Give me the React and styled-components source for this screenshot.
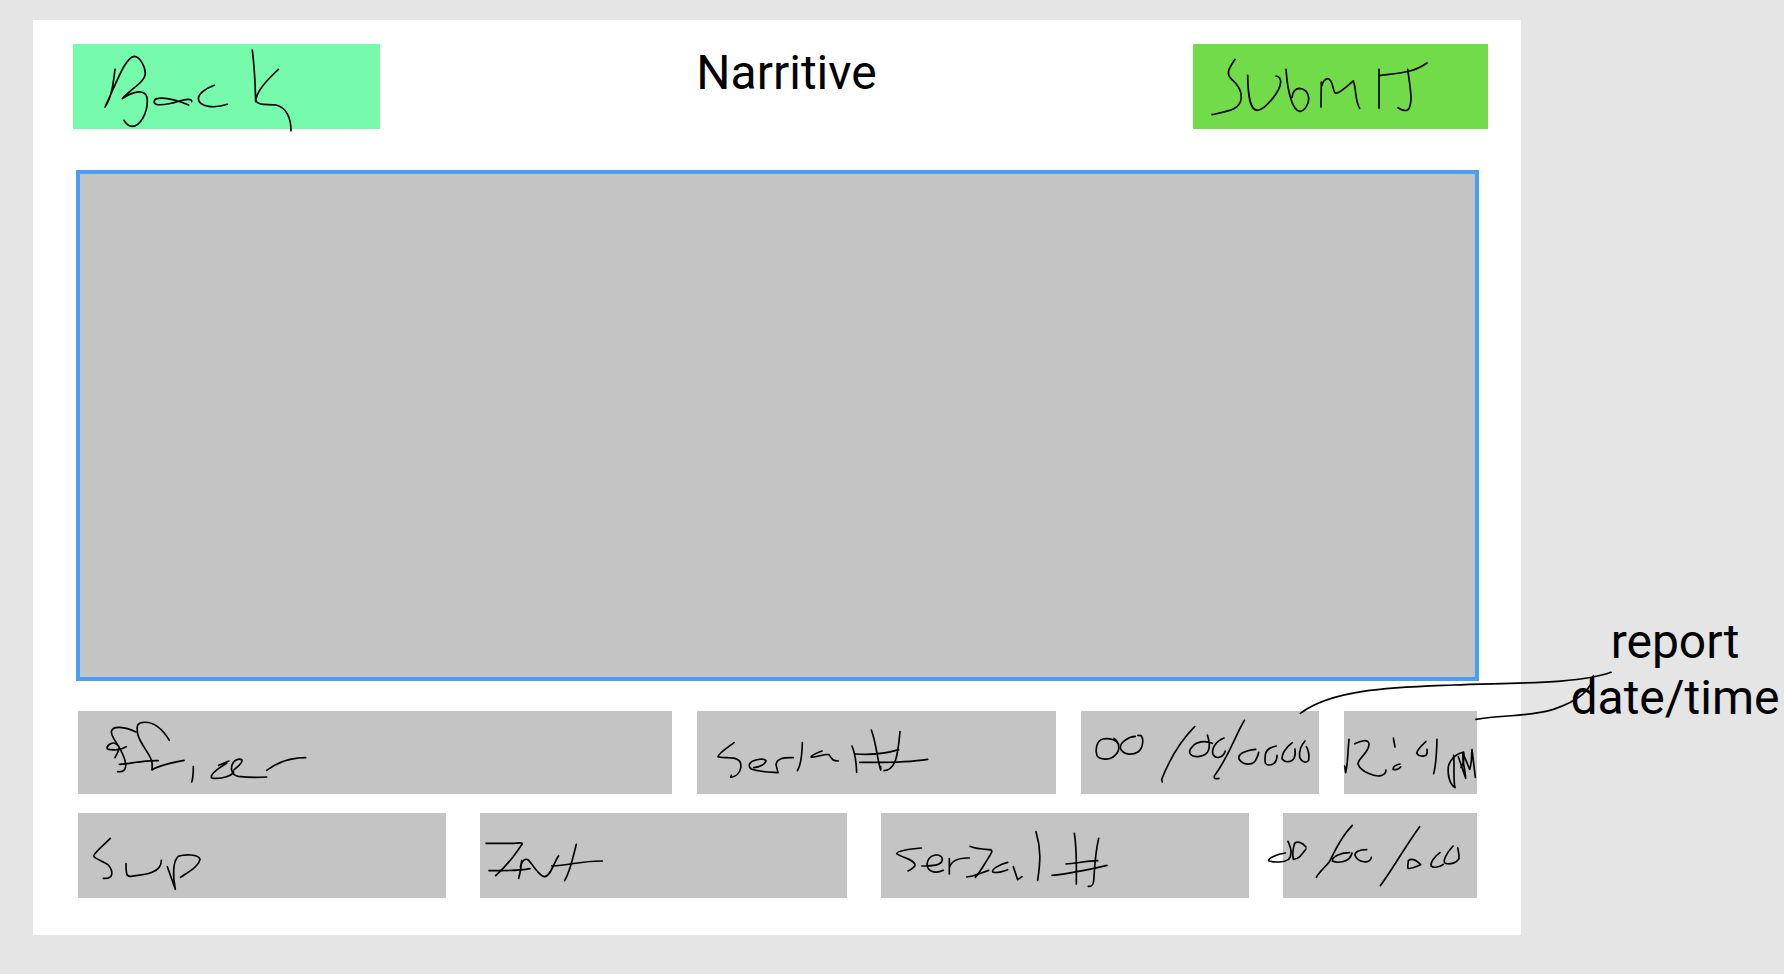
import React from "react";
import styled, { createGlobalStyle } from "styled-components";

const GlobalStyle = createGlobalStyle`
  *, *::before, *::after { box-sizing: border-box; }
  body {
    margin: 0;
    background: #e5e5e5;
    color: #000;
    font-family: Roboto, "Liberation Sans", sans-serif;
  }
`;

const Page = styled.div`
  display: grid;
  grid-template-columns: minmax(0, 1fr) 263px;
  padding: 20px 0 38px 33px;
`;

const Frame = styled.form`
  display: flex;
  flex-direction: column;
  padding: 24px 0 37px;
  background: #fff;
`;

const Header = styled.header`
  display: flex;
  justify-content: space-between;
  align-items: flex-start;
  padding: 0 33px 0 40px;
`;

const Title = styled.h1`
  margin: 0;
  font-size: 48px;
  font-weight: 400;
  line-height: 58px;
`;

const ActionButton = styled.button`
  position: relative;
  flex: none;
  width: ${(p) => p.$width}px;
  height: 85px;
  padding: 0;
  border: 0;
  background: ${(p) => p.$color};
  cursor: pointer;
`;

const NarrativeBox = styled.textarea`
  display: block;
  height: 511px;
  margin: 41px 42px 30px 43px;
  padding: 16px;
  border: 4px solid #489ff5;
  border-radius: 0;
  outline: none;
  resize: none;
  background: #c4c4c4;
  font: inherit;
  font-size: 24px;
`;

const Fields = styled.div`
  display: flex;
  flex-direction: column;
  gap: 19px;
  padding: 0 44px 0 45px;
`;

const FieldRow = styled.div`
  display: grid;
  grid-template-columns: ${(p) => p.$columns};
  gap: ${(p) => p.$gap}px;
  height: ${(p) => p.$height}px;
`;

const FieldLabel = styled.label`
  position: relative;
  display: block;
  min-width: 0;
`;

const FieldInput = styled.input`
  display: block;
  width: 100%;
  height: 100%;
  padding: 0 16px;
  border: 0;
  border-radius: 0;
  background: #c4c4c4;
  font: inherit;
  font-size: 24px;
`;

const InkSvg = styled.svg`
  position: absolute;
  top: 0;
  left: 0;
  overflow: visible;
  pointer-events: none;
  fill: none;
  stroke: #000;
  stroke-width: 5;
  stroke-linecap: round;
  stroke-linejoin: round;
`;

const Note = styled.aside`
  position: relative;
  align-self: end;
  margin-bottom: 209px;
  padding-left: 45px;
  font-size: 48px;
  line-height: 56px;
  text-align: center;
`;

const NoteText = styled.p`
  margin: 0;
`;

const Connector = styled(InkSvg)`
  top: -4px;
  left: -241px;
`;

/* Pen strokes are drawn three units to the pixel; origin is the host's top-left corner. */
function Ink({ origin, strokes }) {
  return (
    <InkSvg width="300" height="80" viewBox={`${origin} 900 240`} aria-hidden="true">
      {strokes.map((d) => (
        <path key={d} d={d} />
      ))}
    </InkSvg>
  );
}

function Field({ name, label, origin, strokes }) {
  return (
    <FieldLabel htmlFor={name}>
      <FieldInput id={name} name={name} type="text" aria-label={label} />
      <Ink origin={origin} strokes={strokes} />
    </FieldLabel>
  );
}

const backInk = [
  "M285 178C280 215 277 258 255 291C285 230 315 140 343 139C360 139 376 172 376 190C376 215 335 235 307 266C330 250 350 245 362 246C378 247 382 258 382 272C382 310 360 349 337 349C325 349 318 341 312 331",
  "M515 275C516 264 495 268 478 273C455 281 430 285 412 284C398 282 400 266 415 265C445 261 475 272 506 285",
  "M583 226C555 236 535 252 535 266C537 292 585 296 622 283",
  "M697 120C703 170 706 230 707 275C709 240 745 208 775 178",
  "M707 272C715 289 745 281 768 285C800 292 813 325 813 362",
];

const submitInk = [
  "M195 148C172 182 170 192 183 206C205 225 215 240 214 262C212 300 175 303 126 314",
  "M233 196C234 260 240 300 262 301C285 300 332 243 332 215C332 205 325 199 318 198",
  "M348 178C352 235 365 305 391 304C405 302 416 280 416 268C416 245 400 235 388 235C375 236 368 245 366 262",
  "M453 291L454 216M454 230C460 212 466 206 473 206C492 208 487 250 498 250C510 250 530 230 550 213C560 240 554 270 569 295",
  "M627 178V295",
  "M627 197C690 189 730 188 771 159",
  "M713 178C718 215 723 240 723 265C722 302 712 310 684 293",
];

const officerInk = [
  "M173 335C190 337 198 330 197 314C194 270 155 240 154 216C156 195 195 200 228 216",
  "M199 260C180 273 150 270 142 267C138 258 152 248 162 249C172 252 180 260 177 268C174 278 168 285 165 293",
  "M178 313C215 311 250 300 295 302",
  "M328 241C300 195 275 185 250 187C225 189 232 208 233 222C240 252 268 278 275 303C278 315 276 325 276 330C300 313 340 308 372 301",
  "M400 320C400 340 399 355 395 366",
  "M476 316L507 303M500 310C475 325 452 342 454 353C465 358 510 354 521 336",
  "M521 330C530 322 548 310 546 300C540 295 528 298 521 306C510 320 512 345 535 349C565 353 595 353 620 351",
  "M620 331C655 305 695 293 737 293",
];

const serialInk = [
  "M163 158C140 175 117 190 115 200C120 204 150 202 165 205C183 210 185 220 183 235C178 255 168 260 153 262L155 256",
  "M222 233C240 232 258 222 259 212C252 204 230 208 218 214C205 222 207 230 215 237C235 245 265 246 295 248L289 224C292 205 310 202 341 203",
  "M368 158C367 195 365 225 353 242",
  "M427 183C410 190 396 195 394 201C410 203 435 190 448 194C458 210 460 212 476 213",
  "M517 168C528 195 530 220 531 247",
  "M527 192C570 195 615 192 657 179",
  "M540 217C610 218 680 218 744 208",
  "M575 120C590 160 592 205 603 240L603 230",
  "M661 125C655 190 650 240 613 242",
];

const reportDateInk = [
  "M147 163C140 150 120 143 100 147C80 152 76 180 82 197C90 210 120 212 135 197C155 180 148 155 133 145",
  "M197 139C175 140 150 158 152 175C160 193 185 198 205 186C222 172 222 145 214 137L205 136",
  "M375 110C330 155 295 220 276 268L278 276",
  "M428 160C405 150 380 155 368 170C350 190 365 203 390 199C420 195 425 170 413 135",
  "M463 144C435 155 425 180 430 193C438 208 460 205 467 183",
  "M524 91C495 140 480 195 434 258C432 266 437 267 448 265",
  "M558 178C525 182 503 192 508 207C518 225 545 228 557 212C562 203 566 195 567 187",
  "M620 168C600 172 588 180 587 195C584 220 587 226 600 225C618 223 622 210 622 196",
  "M668 158C645 175 635 195 638 208C645 218 665 218 673 205C678 195 677 185 676 177",
  "M706 153C695 165 688 185 690 202C695 216 712 222 717 210C719 195 716 180 710 170",
];

const reportTimeInk = [
  "M116 148C112 185 113 220 106 248L103 228",
  "M133 161C150 153 175 145 176 162C176 190 142 205 143 222C150 245 195 262 212 257C224 253 227 248 227 240",
  "M249 144L254 171",
  "M269 222C255 225 248 232 248 238C258 241 265 238 271 231",
  "M347 154C335 165 320 180 319 190C325 200 340 200 348 195C351 190 351 183 350 178",
  "M380 148C379 190 378 220 370 251",
  "M430 196C433 230 428 265 434 293C415 280 412 250 414 230C418 210 435 192 460 186C462 200 460 225 452 232",
  "M444 200L466 265C464 235 455 210 458 190L478 238C485 220 483 195 485 179L495 262",
];

const supervisorInk = [
  "M151 537C130 558 102 580 101 590C105 600 135 607 145 617C160 635 162 660 130 657",
  "M198 613C198 645 200 652 212 651C260 646 305 640 304 603",
  "M322 622L346 690C338 650 338 605 355 591C375 584 415 584 420 600C415 622 385 638 361 654",
];

const initialsInk = [
  "M77 432H160C188 429 188 430 183 438C165 462 155 484 106 529",
  "M86 514C130 513 170 516 209 508",
  "M184 484C182 505 180 520 175 537",
  "M180 503C185 482 195 477 203 481C220 498 235 530 253 532C272 530 280 490 295 469",
  "M274 500C330 497 370 484 426 485",
  "M348 435C335 485 330 515 313 544",
];

const supervisorSerialInk = [
  "M185 176C150 179 110 185 111 193C125 205 166 210 166 228C163 235 155 240 145 245",
  "M187 230C215 230 248 230 248 210C245 192 215 192 204 215C195 245 225 255 251 243",
  "M269 208V254M269 235C275 215 295 205 329 206",
  "M331 171C350 180 375 180 393 181C402 185 390 198 385 208C372 228 360 250 347 264",
  "M321 263C345 260 365 250 387 243",
  "M444 219C420 225 395 240 399 248C410 252 425 248 444 241",
  "M461 232L474 271L487 262",
  "M529 127C545 180 542 220 534 273",
  "M644 132C652 180 650 230 650 284",
  "M717 147C705 200 705 240 702 275C700 290 695 292 686 291",
  "M619 224C650 222 680 215 714 214",
  "M577 258C630 253 690 240 742 228",
];

const supervisorDateInk = [
  "M105 161C80 165 55 175 55 184C70 190 100 190 115 180C128 165 122 145 113 126",
  "M167 143C155 128 140 125 133 132C127 150 127 170 129 180C145 180 155 165 167 149",
  "M306 78C265 120 250 165 237 187C225 203 205 220 198 234",
  "M298 160C275 160 245 170 246 185C260 192 300 190 305 161",
  "M349 151C325 151 313 158 314 168C322 190 360 195 363 174",
  "M508 82C465 140 430 205 390 259",
  "M474 184C485 175 500 185 511 196C495 203 485 210 473 207C470 198 475 190 474 184",
  "M569 160C550 173 540 190 542 200C550 207 570 203 579 195",
  "M608 140C590 160 575 185 585 192C600 197 620 190 626 178C627 165 624 155 622 145",
];

export default function App() {
  return (
    <>
      <GlobalStyle />
      <Page>
        <Frame onSubmit={(e) => e.preventDefault()}>
          <Header>
            <ActionButton type="button" aria-label="Back" $width={307} $color="#76fbad">
              <Ink origin="159 102" strokes={backInk} />
            </ActionButton>
            <Title id="narrative-title">Narritive</Title>
            <ActionButton type="submit" aria-label="Submit" $width={295} $color="#72db49">
              <Ink origin="69 102" strokes={submitInk} />
            </ActionButton>
          </Header>
          <NarrativeBox name="narrative" aria-labelledby="narrative-title" />
          <Fields>
            <FieldRow $columns="594fr 359fr 238fr 133fr" $gap={25} $height={83}>
              <Field name="officer" label="Officer" origin="54 153" strokes={officerInk} />
              <Field name="serial" label="Serial #" origin="52 63" strokes={serialInk} />
              <Field name="report-date" label="Report date" origin="34 63" strokes={reportDateInk} />
              <Field name="report-time" label="Report time" origin="101 63" strokes={reportTimeInk} />
            </FieldRow>
            <FieldRow $columns="368fr 368fr 368fr 194fr" $gap={34} $height={85}>
              <Field name="sup" label="Sup" origin="54 461" strokes={supervisorInk} />
              <Field name="init" label="Init" origin="59 341" strokes={initialsInk} />
              <Field name="sup-serial" label="Sup serial #" origin="64 71" strokes={supervisorSerialInk} />
              <Field name="sup-date" label="Sup date" origin="98 41" strokes={supervisorDateInk} />
            </FieldRow>
          </Fields>
        </Frame>
        <Note>
          <NoteText>report date/time</NoteText>
          <Connector width="360" height="130" viewBox="0 0 1080 390" aria-hidden="true">
            <path d="M61 310C160 235 350 232 520 225C700 218 900 222 993 187" />
            <path d="M588 328C690 312 740 322 820 298C890 275 935 240 940 197" />
          </Connector>
        </Note>
      </Page>
    </>
  );
}
